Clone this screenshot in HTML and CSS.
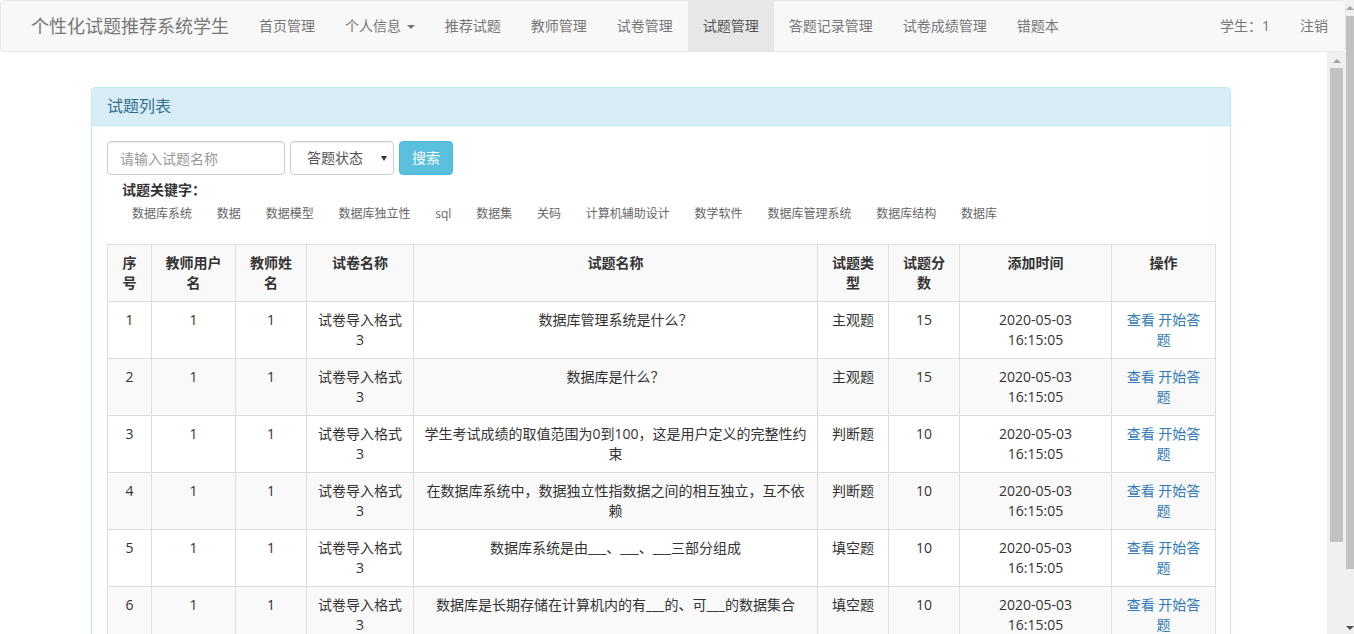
FILE: index.html
```html
<!DOCTYPE html>
<html lang="zh-CN">
<head>
<meta charset="utf-8">
<title>试题管理</title>
<link rel="stylesheet" href="styles.css">
</head>
<body>
<div class="shell">
  <div class="main">
    <nav class="navbar">
      <a class="brand" href="#">个性化试题推荐系统学生</a>
      <ul class="nav">
        <li><a href="#">首页管理</a></li>
        <li><a href="#">个人信息 <span class="caret"></span></a></li>
        <li><a href="#">推荐试题</a></li>
        <li><a href="#">教师管理</a></li>
        <li><a href="#">试卷管理</a></li>
        <li class="active"><a href="#">试题管理</a></li>
        <li><a href="#">答题记录管理</a></li>
        <li><a href="#">试卷成绩管理</a></li>
        <li><a href="#">错题本</a></li>
      </ul>
      <ul class="nav nav-right">
        <li><a href="#">学生：1</a></li>
        <li><a href="#">注销</a></li>
      </ul>
    </nav>
    <div class="frame">
      <div class="content">
        <div class="panel">
          <div class="panel-heading">试题列表</div>
          <div class="panel-body">
            <form class="search">
              <input class="field field-name" type="text" placeholder="请输入试题名称">
              <div class="select-wrap">
                <select class="field field-status">
                  <option>答题状态</option>
                  <option>已答题</option>
                  <option>未答题</option>
                </select>
                <span class="select-arrow"></span>
              </div>
              <button class="btn-info" type="button">搜索</button>
            </form>
            <div class="kw-label">试题关键字：</div>
            <div class="kw-list">
              <a href="#">数据库系统</a>
              <a href="#">数据</a>
              <a href="#">数据模型</a>
              <a href="#">数据库独立性</a>
              <a href="#">sql</a>
              <a href="#">数据集</a>
              <a href="#">关码</a>
              <a href="#">计算机辅助设计</a>
              <a href="#">数学软件</a>
              <a href="#">数据库管理系统</a>
              <a href="#">数据库结构</a>
              <a href="#">数据库</a>
            </div>
            <table class="grid">
              <colgroup>
                <col class="c-no"><col class="c-user"><col class="c-name"><col class="c-paper"><col class="c-q"><col class="c-type"><col class="c-score"><col class="c-time"><col class="c-op">
              </colgroup>
              <tbody>
                <tr>
                  <th>序号</th><th>教师用户名</th><th>教师姓名</th><th>试卷名称</th><th>试题名称</th><th>试题类型</th><th>试题分数</th><th>添加时间</th><th>操作</th>
                </tr>
                <tr>
                  <td>1</td><td>1</td><td>1</td><td>试卷导入格式3</td><td>数据库管理系统是什么？</td><td>主观题</td><td>15</td><td class="time">2020-05-03 16:15:05</td><td><a href="#">查看</a> <a href="#">开始答题</a></td>
                </tr>
                <tr>
                  <td>2</td><td>1</td><td>1</td><td>试卷导入格式3</td><td>数据库是什么？</td><td>主观题</td><td>15</td><td class="time">2020-05-03 16:15:05</td><td><a href="#">查看</a> <a href="#">开始答题</a></td>
                </tr>
                <tr>
                  <td>3</td><td>1</td><td>1</td><td>试卷导入格式3</td><td>学生考试成绩的取值范围为0到100，这是用户定义的完整性约束</td><td>判断题</td><td>10</td><td class="time">2020-05-03 16:15:05</td><td><a href="#">查看</a> <a href="#">开始答题</a></td>
                </tr>
                <tr>
                  <td>4</td><td>1</td><td>1</td><td>试卷导入格式3</td><td>在数据库系统中，数据独立性指数据之间的相互独立，互不依赖</td><td>判断题</td><td>10</td><td class="time">2020-05-03 16:15:05</td><td><a href="#">查看</a> <a href="#">开始答题</a></td>
                </tr>
                <tr>
                  <td>5</td><td>1</td><td>1</td><td>试卷导入格式3</td><td>数据库系统是由___、___、___三部分组成</td><td>填空题</td><td>10</td><td class="time">2020-05-03 16:15:05</td><td><a href="#">查看</a> <a href="#">开始答题</a></td>
                </tr>
                <tr>
                  <td>6</td><td>1</td><td>1</td><td>试卷导入格式3</td><td>数据库是长期存储在计算机内的有___的、可___的数据集合</td><td>填空题</td><td>10</td><td class="time">2020-05-03 16:15:05</td><td><a href="#">查看</a> <a href="#">开始答题</a></td>
                </tr>
              </tbody>
            </table>
          </div>
        </div>
      </div>
      <div class="vscroll" aria-hidden="true">
        <span class="arrow-up"></span>
        <span class="thumb"></span>
      </div>
    </div>
  </div>
  <div class="outer-scroll" aria-hidden="true">
    <span class="arrow-up small"></span>
    <span class="thumb"></span>
    <span class="arrow-down"></span>
  </div>
</div>
</body>
</html>
```
FILE: styles.css
```css
* { box-sizing: border-box; }

body {
  margin: 0;
  font-family: "Open Sans", "Noto Sans CJK SC", sans-serif;
  font-size: 14px;
  line-height: 20px;
  color: #333;
  background: #fff;
  overflow: hidden;
}

a { text-decoration: none; }

.shell {
  height: 634px;
  display: flex;
}
.main {
  width: 1346px;
  flex: none;
  display: flex;
  flex-direction: column;
}

/* ---------- navbar ---------- */
.navbar {
  flex: none;
  height: 52px;
  display: flex;
  align-items: flex-start;
  padding: 0 15px;
  background: #f8f8f8;
  border: 1px solid #e7e7e7;
  border-radius: 4px;
}
.brand {
  padding: 15px;
  font-size: 18px;
  line-height: 20px;
  color: #777;
}
.nav {
  display: flex;
  margin: 0;
  padding: 0;
  list-style: none;
}
.nav a {
  display: block;
  padding: 15px;
  line-height: 20px;
  color: #777;
}
.nav .active a {
  background: #e7e7e7;
  color: #555;
}
.nav-right {
  margin-left: auto;
  margin-right: -13px;
}
.caret {
  display: inline-block;
  width: 0;
  height: 0;
  margin-left: 2px;
  vertical-align: middle;
  border-top: 4px solid #777;
  border-left: 4px solid transparent;
  border-right: 4px solid transparent;
}

/* ---------- content frame ---------- */
.frame {
  flex: 1;
  min-height: 0;
  display: flex;
  overflow: hidden;
}
.content {
  flex: 1;
  padding-top: 35px;
}

.vscroll {
  flex: none;
  width: 19px;
  display: flex;
  flex-direction: column;
  align-items: center;
  padding: 7px 2px 0 2px;
  background: #f0f0f0;
}
.vscroll .thumb {
  width: 13px;
  height: 474px;
  margin-top: 5px;
  background: #c1c1c1;
}
.arrow-up {
  width: 0;
  height: 0;
  border-bottom: 4px solid #a3a3a3;
  border-left: 4px solid transparent;
  border-right: 4px solid transparent;
}

.outer-scroll {
  flex: none;
  width: 8px;
  display: flex;
  flex-direction: column;
  align-items: center;
  padding-top: 6px;
  background: #f0f0f0;
}
.outer-scroll .thumb {
  width: 8px;
  height: 553px;
  margin-top: 6px;
  background: #c1c1c1;
}
.arrow-down {
  width: 0;
  height: 0;
  margin-top: auto;
  margin-bottom: 4px;
  border-top: 4px solid #505050;
  border-left: 4px solid transparent;
  border-right: 4px solid transparent;
}

.panel {
  width: 1140px;
  margin: 0 0 20px 91px;
  border: 1px solid #bce8f1;
  border-radius: 4px;
  background: #fff;
}
.panel-heading {
  padding: 10px 15px;
  font-size: 16px;
  line-height: 17px;
  color: #31708f;
  background: #d9edf7;
  border-bottom: 1px solid #bce8f1;
  border-radius: 3px 3px 0 0;
}
.panel-body {
  padding: 15px;
}

/* ---------- search form ---------- */
.search {
  display: flex;
  gap: 5px;
  margin: 0;
}
.field {
  height: 34px;
  padding: 6px 12px;
  font: inherit;
  font-size: 14px;
  color: #555;
  background: #fff;
  border: 1px solid #ccc;
  border-radius: 4px;
  box-shadow: inset 0 1px 1px rgba(0,0,0,.075);
}
.field::placeholder { color: #999; }
.field-name { width: 178px; }
.select-wrap { position: relative; }
.field-status {
  width: 104px;
  padding-left: 16px;
  appearance: none;
  -webkit-appearance: none;
}
.select-arrow {
  position: absolute;
  top: 15px;
  right: 7px;
  width: 0;
  height: 0;
  border-top: 5px solid #333;
  border-left: 3px solid transparent;
  border-right: 3px solid transparent;
  pointer-events: none;
}
.btn-info {
  height: 34px;
  padding: 6px 12px;
  font: inherit;
  font-size: 14px;
  color: #fff;
  background: #5bc0de;
  border: 1px solid #46b8da;
  border-radius: 4px;
}

/* ---------- keywords ---------- */
.kw-label {
  margin-top: 6px;
  padding-left: 15px;
  font-size: 14px;
  line-height: 18px;
  font-weight: bold;
  color: #333;
}
.kw-list {
  display: flex;
  gap: 24.8px;
  margin-top: 6px;
  padding-left: 25px;
  font-size: 12px;
  line-height: 18px;
}
.kw-list a { color: #666; }

/* ---------- table ---------- */
.grid {
  width: 1108px;
  margin-top: 21px;
  border-collapse: collapse;
  table-layout: fixed;
}
.grid th,
.grid td {
  padding: 8px;
  border: 1px solid #ddd;
  text-align: center;
  vertical-align: top;
  line-height: 20px;
}
.grid th { font-weight: bold; }
.grid tr:nth-child(odd) { background: #f9f9f9; }
.grid a { color: #337ab7; }
.grid td.time { padding-left: 16px; padding-right: 16px; }

.c-no { width: 44px; }
.c-user { width: 84px; }
.c-name { width: 71px; }
.c-paper { width: 107px; }
.c-q { width: 404px; }
.c-type { width: 71px; }
.c-score { width: 71px; }
.c-time { width: 152px; }
.c-op { width: 104px; }
```
